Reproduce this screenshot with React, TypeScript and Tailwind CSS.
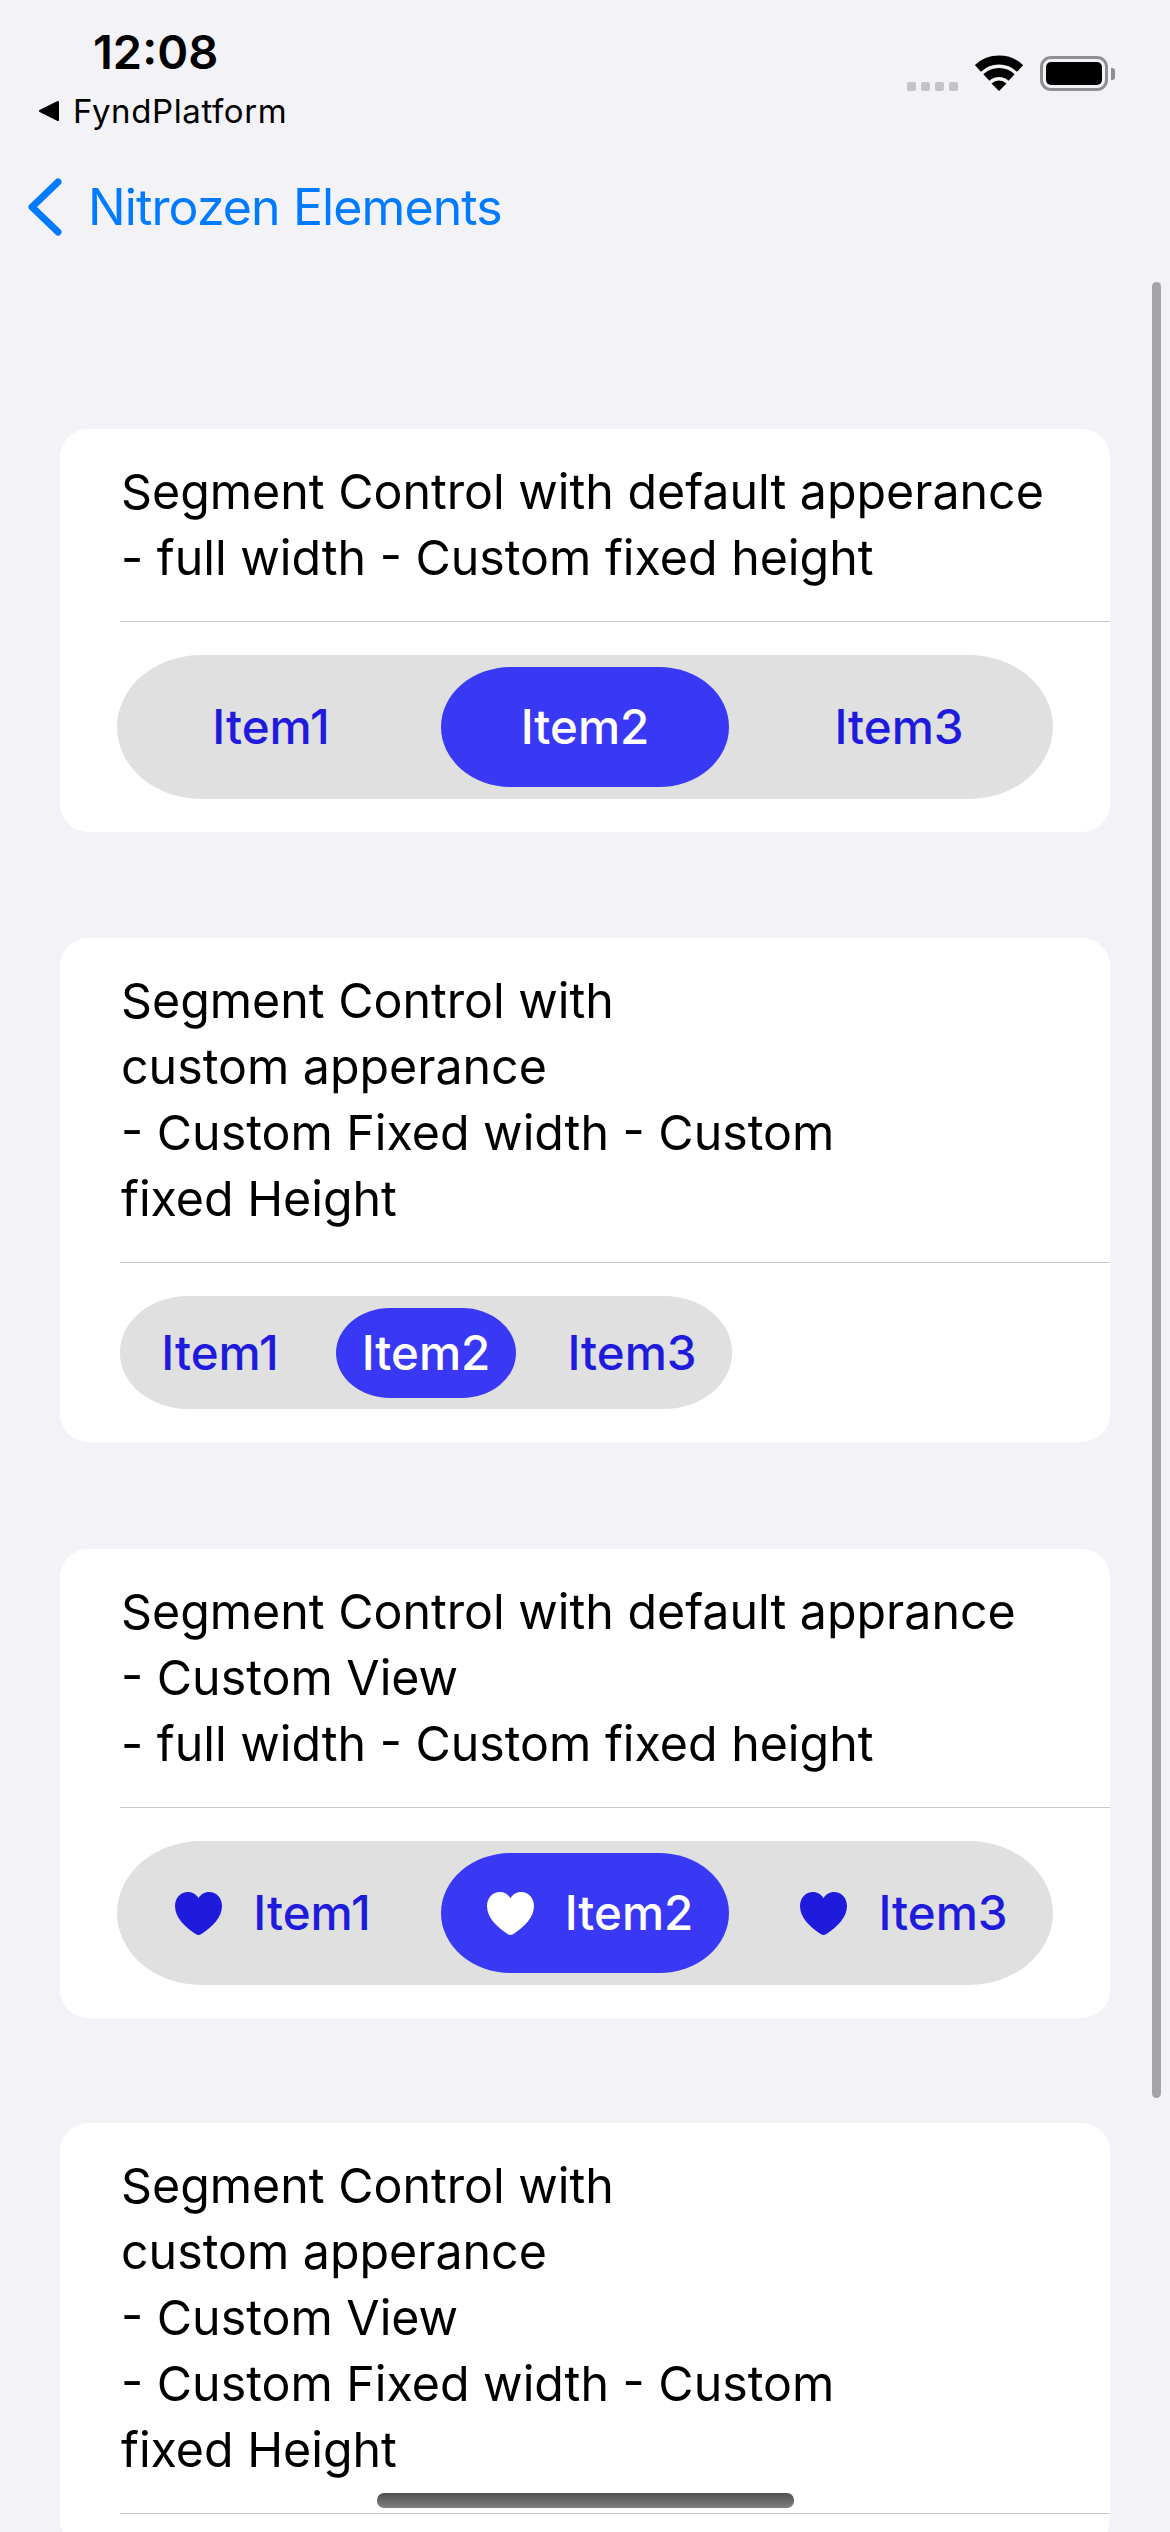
import React from "react";

function Heart({ className }: { className: string }) {
  return (
    <svg viewBox="0 0 47 43" className={className} fill="currentColor">
      <path d="M23.5 43C22.6 43 21.6 42.5 20.6 41.9C9.8 35.2 0 25.6 0 14.1C0 5.9 5.6 0 13 0C17.7 0 21.3 2.4 23.5 6.2C25.7 2.4 29.3 0 34 0C41.4 0 47 5.9 47 14.1C47 25.6 37.2 35.2 26.4 41.9C25.4 42.5 24.4 43 23.5 43Z" />
    </svg>
  );
}

function Segment({
  fixed,
  withIcon,
}: {
  fixed?: boolean;
  withIcon?: boolean;
}) {
  const items = ["Item1", "Item2", "Item3"];
  return (
    <div
      className={
        fixed
          ? "flex w-[612px] h-[113px] items-center gap-[26px] rounded-[68px/56px] bg-[#e0e0e0] px-[10px]"
          : "flex w-[936px] h-[144px] items-center gap-[26px] rounded-[84px/72px] bg-[#e0e0e0] px-[10px]"
      }
    >
      {items.map((item, i) => (
        <div
          key={item}
          className={
            (fixed
              ? "h-[90px] w-[180px] rounded-[54px/45px] "
              : "h-[120px] w-[288px] rounded-[70px/60px] ") +
            (i === 1 ? "bg-[#3838f5] text-white " : "text-[#1f1bdc] ") +
            (withIcon ? (i === 0 ? "pl-[4px] " : "pl-[10px] ") : "") +
            "flex items-center justify-center text-[47.5px] font-medium"
          }
        >
          {withIcon && <Heart className="mr-[31px] h-[43px] w-[47px]" />}
          {item}
        </div>
      ))}
    </div>
  );
}

function Card({
  lines,
  fixed,
  withIcon,
  cutOff,
  className,
}: {
  lines: string[];
  fixed?: boolean;
  withIcon?: boolean;
  cutOff?: boolean;
  className: string;
}) {
  return (
    <div className={"rounded-[28px] bg-white " + className}>
      <div className="pl-[61px] pt-[30px] pb-[30px] text-[48.3px] leading-[66px] text-black">
        {lines.map((l) => (
          <div key={l} className="whitespace-nowrap">
            {l}
          </div>
        ))}
      </div>
      <div className="ml-[60px] h-px bg-[#c8c8c8]" />
      {/* last card runs off the screen before its segment starts */}
      {cutOff ? (
        <div className="h-[33px]" />
      ) : (
        <div
          className={
            fixed
              ? "pl-[60px] pt-[33px] pb-[33px]"
              : "pl-[57px] pt-[33px] pb-[33px]"
          }
        >
          <Segment fixed={fixed} withIcon={withIcon} />
        </div>
      )}
    </div>
  );
}

function StatusBar() {
  return (
    <div className="flex h-[170px] items-start justify-between pr-[55px]">
      <div>
        <div className="pl-[93px] pt-[25px] text-[47px] font-semibold leading-[54px] text-black">
          12:08
        </div>
        <div className="flex items-center pl-[38px] pt-[13px]">
          <svg viewBox="0 0 22 22" className="mr-[13px] h-[22px] w-[22px]">
            <path
              d="M20 2L2 11L20 20Z"
              fill="#000"
              stroke="#000"
              strokeWidth="2"
              strokeLinejoin="round"
            />
          </svg>
          <span className="text-[33px] font-normal leading-[38px] tracking-[0.6px] text-black">
            FyndPlatform
          </span>
        </div>
      </div>
      <div className="flex items-end pt-[55px]">
        <div className="mr-[17px] flex gap-[5px]">
          <div className="h-[9px] w-[9px] rounded-[2px] bg-[#c4c4c8]" />
          <div className="h-[9px] w-[9px] rounded-[2px] bg-[#c4c4c8]" />
          <div className="h-[9px] w-[9px] rounded-[2px] bg-[#c4c4c8]" />
          <div className="h-[9px] w-[9px] rounded-[2px] bg-[#c4c4c8]" />
        </div>
        <svg viewBox="0 0 48 36" className="mr-[17px] h-[36px] w-[48px]">
          <path
            d="M2.9 13.4A31 31 0 0 1 45.1 13.4"
            fill="none"
            stroke="#000"
            strokeWidth="9"
          />
          <path
            d="M11.4 22.5A18.5 18.5 0 0 1 36.6 22.5"
            fill="none"
            stroke="#000"
            strokeWidth="9"
          />
          <path d="M16.5 28.5A11 11 0 0 1 31.5 28.5L24 36Z" fill="#000" />
        </svg>
        <div className="flex items-center">
          <div className="h-[35px] w-[68px] rounded-[11px] border-[3px] border-[#8e8e93] p-[3px]">
            <div className="h-full w-full rounded-[5px] bg-black" />
          </div>
          <div className="ml-[3px] h-[12px] w-[4px] rounded-r-[3px] bg-[#8e8e93]" />
        </div>
      </div>
    </div>
  );
}

export default function App() {
  return (
    <div className="relative h-[2532px] w-[1170px] overflow-hidden bg-[#f2f2f7] font-['Inter','Liberation_Sans',sans-serif]">
      <StatusBar />
      <div className="flex h-[73px] items-center pl-[28px]">
        <svg viewBox="0 0 34 58" className="mr-[26px] h-[58px] w-[34px]">
          <path
            d="M30 4L4 29L30 54"
            fill="none"
            stroke="#007aff"
            strokeWidth="7"
            strokeLinecap="round"
            strokeLinejoin="round"
          />
        </svg>
        <span className="text-[50px] leading-[60px] tracking-[-0.9px] text-[#007aff]">
          Nitrozen Elements
        </span>
      </div>
      <div className="flex flex-col px-[60px] pt-[186px]">
        <Card
          className="mb-[106px]"
          lines={[
            "Segment Control with default apperance",
            "- full width - Custom fixed height",
          ]}
        />
        <Card
          className="mb-[107px]"
          fixed
          lines={[
            "Segment Control with",
            "custom apperance",
            "- Custom Fixed width - Custom",
            "fixed Height",
          ]}
        />
        <Card
          className="mb-[105px]"
          withIcon
          lines={[
            "Segment Control with default apprance",
            "- Custom View",
            "- full width - Custom fixed height",
          ]}
        />
        <Card
          className=""
          cutOff
          lines={[
            "Segment Control with",
            "custom apperance",
            "- Custom View",
            "- Custom Fixed width - Custom",
            "fixed Height",
          ]}
        />
      </div>
      {/* scroll indicator and home bar sit over the content */}
      <div className="absolute left-[1152px] top-[282px] h-[1816px] w-[9px] rounded-full bg-[#a3a3a8]" />
      <div className="absolute left-[377px] top-[2493px] h-[15px] w-[417px] rounded-[7px] bg-gradient-to-b from-[#505050] to-[#808080]" />
    </div>
  );
}
